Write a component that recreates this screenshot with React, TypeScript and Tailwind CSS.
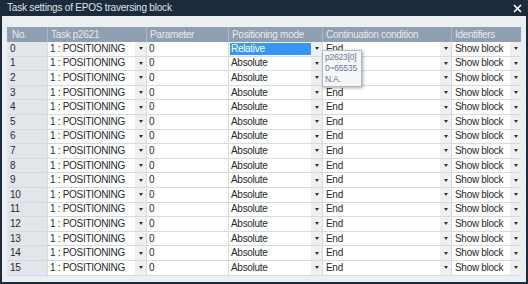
import React from "react";

const Arrow = () => (
  <div className="w-[11px] h-full shrink-0 bg-[#eef0f2] flex items-center justify-center">
    <div className="w-0 h-0 border-l-[2px] border-r-[2px] border-t-[3px] border-l-transparent border-r-transparent border-t-[#333]" />
  </div>
);

export default function App() {
  const rows = Array.from({ length: 16 }, (_, i) => i);
  return (
    <div
      className="w-[528px] h-[284px] bg-[#1d2a3b] flex flex-col px-[2px] pb-[2px] overflow-hidden"
      style={{ fontFamily: '"Liberation Sans", Arial, sans-serif' }}
    >
      <div className="h-[16px] shrink-0 flex items-center justify-between pl-[5px] pr-[4px]">
        <span className="text-[10px] tracking-[-0.2px] text-[#dfe4ea] leading-none whitespace-nowrap">Task settings of EPOS traversing block</span>
        <svg width="9" height="9" viewBox="0 0 9 9">
          <path d="M1 1 L8 8 M8 1 L1 8" stroke="#ffffff" strokeWidth="1.7" />
        </svg>
      </div>
      <div className="flex-1 bg-[#eceff2] pt-[11px] pl-[5px] relative">
        <div className="w-[514px] text-[10px] tracking-[-0.3px] leading-none whitespace-nowrap">
          <div className="flex h-[15px] bg-[#8e9fb1] text-[#e6eaee]">
            <div className="w-[41px] pl-[5px] flex items-center border-r border-[#a9b7c4]">No.</div>
            <div className="w-[99px] pl-[3px] flex items-center border-r border-[#a9b7c4]">Task p2621</div>
            <div className="w-[82px] pl-[3px] flex items-center border-r border-[#a9b7c4]">Parameter</div>
            <div className="w-[94px] pl-[3px] flex items-center border-r border-[#a9b7c4]">Positioning mode</div>
            <div className="w-[129px] pl-[3px] flex items-center border-r border-[#a9b7c4]">Continuation condition</div>
            <div className="w-[69px] pl-[3px] flex items-center">Identifiers</div>
          </div>
          {rows.map((i) => (
            <div key={i} className="flex h-[14.6px] border-b border-[#d6dbe0] text-[#2a2a2a]">
              <div className="w-[41px] bg-[#e2e6ea] pl-[3px] flex items-center border-r border-[#d6dbe0]">{i}</div>
              <div className="w-[99px] bg-white flex items-center border-r border-[#d6dbe0]">
                <span className="flex-1 pl-[2px] overflow-hidden">1 : POSITIONING</span>
                <Arrow />
              </div>
              <div className="w-[82px] bg-white pl-[2px] flex items-center border-r border-[#d6dbe0]">0</div>
              <div className="w-[94px] bg-white flex items-center border-r border-[#d6dbe0]">
                {i === 0 ? (
                  <span className="flex-1 ml-[1px] h-[12px] bg-[#3497f5] text-white pl-[1px] flex items-center overflow-hidden">Relative</span>
                ) : (
                  <span className="flex-1 pl-[2px] overflow-hidden">Absolute</span>
                )}
                <Arrow />
              </div>
              <div className="w-[129px] bg-white flex items-center border-r border-[#d6dbe0]">
                <span className="flex-1 pl-[3px] overflow-hidden">End</span>
                <Arrow />
              </div>
              <div className="w-[69px] bg-white flex items-center">
                <span className="flex-1 pl-[3px] overflow-hidden">Show block</span>
                <Arrow />
              </div>
            </div>
          ))}
        </div>
        <div className="absolute left-[320px] top-[34px] w-[40px] h-[37px] bg-[#f5f6f8] border border-[#b4b9c0] shadow-[1px_1px_3px_rgba(0,0,0,0.35)] pl-[2px] pt-[1px] text-[8.5px] tracking-[-0.2px] leading-[11px] text-[#6a7890] whitespace-nowrap">
          <div>p2623[0]</div>
          <div>0~65535</div>
          <div>N.A.</div>
        </div>
      </div>
    </div>
  );
}
